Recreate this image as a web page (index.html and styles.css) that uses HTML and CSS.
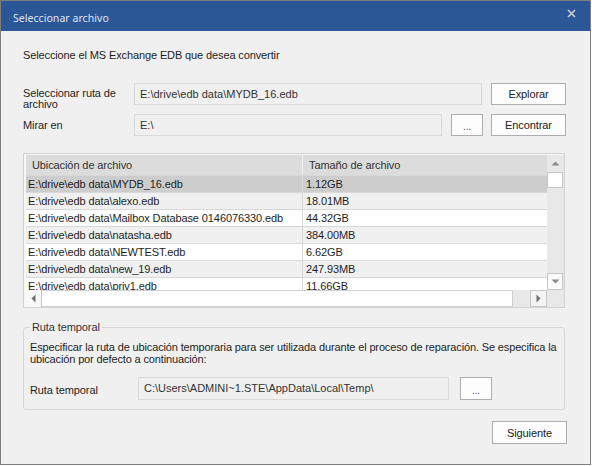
FILE: index.html
```html
<!DOCTYPE html>
<html lang="es">
<head>
<meta charset="utf-8">
<title>Seleccionar archivo</title>
<link rel="stylesheet" href="styles.css">
</head>
<body>
<div class="window">
  <div class="titlebar">
    <span class="title">Seleccionar archivo</span>
    <svg class="close" width="9" height="9" viewBox="0 0 9 9"><path d="M1 1L8 8M8 1L1 8" stroke="#c9d0dc" stroke-width="1.6"/></svg>
  </div>
  <div class="content">
    <p class="intro">Seleccione el MS Exchange EDB que desea convertir</p>
    <div class="row">
      <span class="lbl lbl-two">Seleccionar ruta de<br>archivo</span>
      <div class="field field-path">E:\drive\edb data\MYDB_16.edb</div>
      <button class="btn btn-wide">Explorar</button>
    </div>
    <div class="row row-second">
      <span class="lbl">Mirar en</span>
      <div class="field field-look">E:\</div>
      <button class="btn btn-dots">...</button>
      <button class="btn btn-wide">Encontrar</button>
    </div>
    <div class="table">
      <div class="list">
        <div class="tr th"><div class="c1">Ubicación de archivo</div><div class="c2">Tamaño de archivo</div></div>
        <div class="tr sel"><div class="c1">E:\drive\edb data\MYDB_16.edb</div><div class="c2">1.12GB</div></div>
        <div class="tr alt"><div class="c1">E:\drive\edb data\alexo.edb</div><div class="c2">18.01MB</div></div>
        <div class="tr"><div class="c1">E:\drive\edb data\Mailbox Database 0146076330.edb</div><div class="c2">44.32GB</div></div>
        <div class="tr alt"><div class="c1">E:\drive\edb data\natasha.edb</div><div class="c2">384.00MB</div></div>
        <div class="tr"><div class="c1">E:\drive\edb data\NEWTEST.edb</div><div class="c2">6.62GB</div></div>
        <div class="tr alt"><div class="c1">E:\drive\edb data\new_19.edb</div><div class="c2">247.93MB</div></div>
        <div class="tr"><div class="c1">E:\drive\edb data\priv1.edb</div><div class="c2">11.66GB</div></div>
      </div>
      <div class="vscroll">
        <div class="sb-btn sb-up"><svg width="9" height="5" viewBox="0 0 9 5"><path d="M0.5 4.5L4.5 0.5L8.5 4.5Z" fill="#8a8a8a"/></svg></div>
        <div class="v-thumb"></div>
        <div class="v-track"></div>
        <div class="sb-btn sb-down"><svg width="9" height="5" viewBox="0 0 9 5"><path d="M0.5 0.5L4.5 4.5L8.5 0.5Z" fill="#8a8a8a"/></svg></div>
      </div>
      <div class="hscroll">
        <div class="sb-btn sb-left"><svg width="5" height="9" viewBox="0 0 5 9"><path d="M4.5 0.5L0.5 4.5L4.5 8.5Z" fill="#6e6e6e"/></svg></div>
        <div class="h-thumb"></div>
        <div class="h-track"></div>
        <div class="sb-btn sb-right"><svg width="5" height="9" viewBox="0 0 5 9"><path d="M0.5 0.5L4.5 4.5L0.5 8.5Z" fill="#6e6e6e"/></svg></div>
      </div>
      <div class="corner"></div>
    </div>
    <fieldset class="group">
      <legend>Ruta temporal</legend>
      <p class="desc">Especificar la ruta de ubicación temporaria para ser utilizada durante el proceso de reparación. Se especifica la<br>ubicación por defecto a continuación:</p>
      <div class="row row-temp">
        <span class="lbl lbl-temp">Ruta temporal</span>
        <div class="field field-temp">C:\Users\ADMINI~1.STE\AppData\Local\Temp\</div>
        <button class="btn btn-dots">...</button>
      </div>
    </fieldset>
    <div class="footer">
      <button class="btn btn-next">Siguiente</button>
    </div>
  </div>
</div>
</body>
</html>
```
FILE: styles.css
```css
* { box-sizing: border-box; }
html, body { margin: 0; padding: 0; background: #ffffff; }
body {
  font-family: "Liberation Sans", Arial, sans-serif;
  font-size: 11px;
  color: #1e1e1e;
}
.window {
  width: 591px;
  height: 465px;
  border: 1px solid #7d7d7d;
  background: #f0f0f0;
  display: flex;
  flex-direction: column;
}
.titlebar {
  height: 30px;
  background: #2b5797;
  display: flex;
  align-items: center;
  justify-content: space-between;
  padding: 3px 14px 0 12px;
  flex: none;
}
.titlebar .title {
  font-family: "Noto Sans", "Open Sans", sans-serif;
  font-size: 10.5px;
  color: #dfe5ef;
  letter-spacing: 0.05px;
}
.titlebar .close { margin-top: -9px; }
.content {
  padding: 0 0 0 22px;
  width: 566px;
}
.intro {
  margin: 17px 0 0 0;
  line-height: 14px;
  letter-spacing: -0.12px;
}
.row {
  display: flex;
  align-items: center;
  height: 22px;
  margin-top: 21px;
}
.row-second { margin-top: 9px; }
.lbl {
  width: 111px;
  flex: none;
  letter-spacing: -0.1px;
}
.lbl-two { line-height: 11px; padding-top: 10px; }
.field {
  height: 22px;
  border: 1px solid #dadada;
  background: #f0f0f0;
  line-height: 20px;
  padding-left: 5px;
  color: #333;
  flex: none;
  white-space: nowrap;
  overflow: hidden;
}
.field-path { width: 348px; margin-right: 9px; }
.field-look { width: 308px; margin-right: 9px; }
.btn {
  font-family: "Liberation Sans", Arial, sans-serif;
  font-size: 11px;
  color: #222;
  background: #fdfdfd;
  border: 1px solid #adadad;
  border-radius: 0;
  padding: 0;
  height: 22px;
  flex: none;
  letter-spacing: -0.1px;
}
.btn-wide { width: 75px; }
.btn-dots { width: 32px; margin-right: 8px; color: #555; padding-top: 3px; font-size: 10px; }
.table {
  margin-top: 17px;
  width: 542px;
  height: 155px;
  border: 1px solid #d2d2d2;
  padding: 1px 0 0 2px;
  background: #f7f7f7;
  display: grid;
  grid-template-columns: 521px 17px;
  grid-template-rows: 135px 17px;
}
.list {
  overflow: hidden;
  background: #ffffff;
}
.tr {
  display: flex;
  height: 17px;
  border-bottom: 1px solid #d8d8d8;
  line-height: 16px;
  white-space: nowrap;
}
.tr .c1 {
  width: 277px;
  border-right: 1px solid #d8d8d8;
  padding-left: 2px;
  overflow: hidden;
  letter-spacing: -0.1px;
}
.tr .c2 { flex: 1; padding-left: 3px; letter-spacing: -0.1px; }
.th {
  height: 21px;
  line-height: 20px;
  background: #dcdcdc;
  color: #333;
}
.th .c1 { padding-left: 6px; border-right-color: #f0f0f0; }
.th .c2 { padding-left: 6px; }
.sel { background: #cdcdcd; }
.sel .c1 { border-right-color: #dcdcdc; }
.alt { background: #f0f0f0; }
.vscroll {
  background: #e8e8e8;
  display: flex;
  flex-direction: column;
  grid-row: 1;
  grid-column: 2;
}
.sb-btn {
  display: flex;
  align-items: center;
  justify-content: center;
  flex: none;
}
.sb-up { height: 17px; }
.v-thumb { height: 16px; background: #fff; border: 1px solid #c6c6c6; margin: 0 1px 0 0; }
.v-track { flex: 1; }
.sb-down { height: 17px; background: #fbfbfb; border: 1px solid #c6c6c6; margin-right: 1px; }
.hscroll {
  grid-row: 2;
  grid-column: 1;
  background: #e8e8e8;
  display: flex;
}
.sb-left { width: 16px; background: #f9f9f9; border-right: 1px solid #c6c6c6; }
.h-thumb { width: 471px; background: #fff; border: 1px solid #d0d0d0; border-left: none; }
.h-track { flex: 1; }
.sb-right { width: 17px; background: #f4f4f4; border: 1px solid #c6c6c6; }
.corner { grid-row: 2; grid-column: 2; background: #e8e8e8; }
.group {
  margin: 12px 0 0 0;
  width: 542px;
  border: 1px solid #d6d6d6;
  border-radius: 3px;
  padding: 0 6px 9px 6px;
  min-width: 0;
}
.group legend {
  padding: 0 2px;
  line-height: 14px;
  color: #333;
  letter-spacing: -0.1px;
}
.desc {
  margin: 7px 0 0 0;
  line-height: 12px;
  letter-spacing: -0.14px;
  white-space: nowrap;
}
.row-temp { margin-top: 12px; height: 23px; }
.lbl-temp { width: 108px; padding-top: 2px; }
.field-temp { width: 311px; height: 23px; margin-right: 11px; }
.row-temp .btn-dots { height: 23px; }
.footer {
  display: flex;
  justify-content: flex-end;
  margin-top: 11px;
}
.btn-next { width: 75px; height: 23px; }
```
